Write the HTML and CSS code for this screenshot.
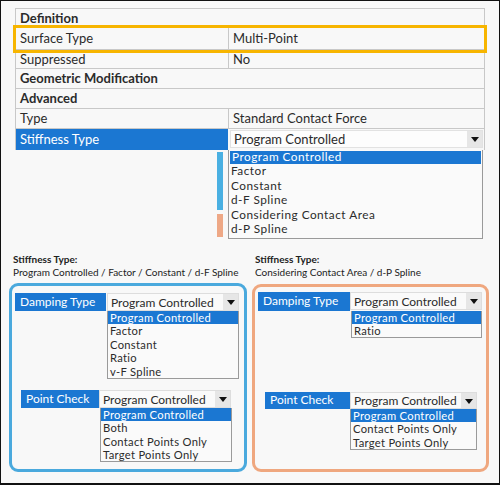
FILE: index.html
```html
<!DOCTYPE html>
<html lang="en">
  <head>
    <meta charset="UTF-8">
    <title>Contact Stiffness Options</title>
    <link rel="stylesheet" href="styles.css">
  </head>
  <body>
    <div class="frame">

      <!-- details grid -->
      <div class="props">
        <div class="row header"><span class="cell">Definition</span></div>
        <div class="row picked"><span class="cell">Surface Type</span><span class="cell">Multi-Point</span></div>
        <div class="row"><span class="cell">Suppressed</span><span class="cell">No</span></div>
        <div class="row header"><span class="cell">Geometric Modification</span></div>
        <div class="row header"><span class="cell">Advanced</span></div>
        <div class="row"><span class="cell">Type</span><span class="cell">Standard Contact Force</span></div>
        <div class="row active">
          <span class="cell">Stiffness Type</span>
          <span class="cell"><span class="combo wide">Program Controlled<span class="arrow"></span></span></span>
        </div>
      </div>

      <div class="popup">
        <div class="marks">
          <span class="mark blue"></span>
          <span class="mark peach"></span>
        </div>
        <ul class="options main-list">
          <li class="sel">Program Controlled</li>
          <li>Factor</li>
          <li>Constant</li>
          <li>d-F Spline</li>
          <li>Considering Contact Area</li>
          <li>d-P Spline</li>
        </ul>
      </div>

      <div class="cases">
        <div class="case left">
          <div class="caption"><b>Stiffness Type:</b><br>Program Controlled / Factor / Constant / d-F Spline</div>
          <div class="panel blue">
            <div class="group damp">
              <span class="label">Damping Type</span>
              <span class="combo">Program Controlled<span class="arrow"></span></span>
            </div>
            <ul class="options damp-list">
              <li class="sel">Program Controlled</li>
              <li>Factor</li>
              <li>Constant</li>
              <li>Ratio</li>
              <li>v-F Spline</li>
            </ul>
            <div class="group check">
              <span class="label">Point Check</span>
              <span class="combo">Program Controlled<span class="arrow"></span></span>
            </div>
            <ul class="options check-list">
              <li class="sel">Program Controlled</li>
              <li>Both</li>
              <li>Contact Points Only</li>
              <li>Target Points Only</li>
            </ul>
          </div>
        </div>

        <div class="case right">
          <div class="caption"><b>Stiffness Type:</b><br>Considering Contact Area / d-P Spline</div>
          <div class="panel peach">
            <div class="group damp">
              <span class="label">Damping Type</span>
              <span class="combo">Program Controlled<span class="arrow"></span></span>
            </div>
            <ul class="options damp-list">
              <li class="sel">Program Controlled</li>
              <li>Ratio</li>
            </ul>
            <div class="group check">
              <span class="label">Point Check</span>
              <span class="combo">Program Controlled<span class="arrow"></span></span>
            </div>
            <ul class="options check-list">
              <li class="sel">Program Controlled</li>
              <li>Contact Points Only</li>
              <li>Target Points Only</li>
            </ul>
          </div>
        </div>
      </div>

    </div>
  </body>
</html>
```

FILE: styles.css
```css
html {
  font-family: Lato, "Noto Sans", sans-serif;
}

body {
  margin: 0;
}

.frame {
  box-sizing: border-box;
  width: 500px;
  height: 485px;
  border: 1px solid #111;
  border-bottom-width: 2px;
  background: #f8f8f8;
  color: #2b2b2b;
  font-size: 13px;
  overflow: hidden;
}

/* details grid */
.props {
  margin: 7px 0 0 14px;
  width: 470px;
  box-sizing: border-box;
  border: 1px solid #c8c8c8;
  border-bottom: none;
}

.row {
  display: grid;
  grid-template-columns: 212px 1fr;
  height: 20px;
  border-bottom: 1px solid #c8c8c8;
  box-sizing: border-box;
}

.row:first-child {
  height: 19px;
}

.cell {
  padding-left: 4px;
  line-height: 19px;
  white-space: nowrap;
}

.row:first-child .cell {
  line-height: 18px;
}

.cell + .cell {
  border-left: 1px solid #c8c8c8;
}

.row.header .cell {
  font-weight: bold;
}

.row.picked {
  height: 22px;
  outline: 3px solid #f7b500;
}

.row.picked .cell {
  line-height: 21px;
}

.row.picked + .row {
  height: 19px;
}

.row.picked + .row .cell {
  line-height: 18px;
}

.row.active {
  height: 21px;
  border-bottom: none;
}

.row.active .cell:first-child {
  background: #1b77d2;
  color: #fff;
  line-height: 20px;
}

.row.active .cell + .cell {
  padding: 1px 1px 0 1px;
  border-left-color: #f8f8f8;
}

/* closed drop-down box */
.combo {
  position: relative;
  display: block;
  box-sizing: border-box;
  height: 18px;
  padding-left: 3px;
  line-height: 17px;
  background: #fdfdfd;
  border: 1px solid #e2e2e2;
  white-space: nowrap;
}

.arrow {
  position: absolute;
  right: 0;
  top: 0;
  width: 15px;
  height: 16px;
  background: #e6e6e6;
}

.arrow::after {
  content: "";
  position: absolute;
  left: 4px;
  top: 6px;
  border-left: 4px solid transparent;
  border-right: 4px solid transparent;
  border-top: 5px solid #111;
}

/* opened lists */
.options {
  list-style: none;
  margin: 0;
  padding: 0;
  box-sizing: border-box;
  background: #fafafa;
  border: 1px solid #9a9a9a;
  border-top: none;
}

.options li {
  padding-left: 2px;
  white-space: nowrap;
}

.options li.sel {
  background: #1b77d2;
  color: #fff;
}

.popup {
  display: flex;
  margin-left: 216px;
}

.marks {
  display: flex;
  flex-direction: column;
  padding-top: 2px;
  width: 11px;
}

.mark {
  display: block;
  width: 6px;
}

.mark.blue {
  height: 58px;
  background: #4ab0e2;
}

.mark.peach {
  height: 23px;
  margin-top: 4px;
  background: #eea886;
}

.main-list {
  width: 255px;
  height: 89px;
}

.main-list li {
  height: 14.5px;
  line-height: 14.5px;
  font-size: 11.8px;
  letter-spacing: 0.5px;
}

.main-list li.sel {
  margin: 1px 1px 0 1px;
  height: 13px;
  line-height: 12px;
}

/* bottom comparison */
.cases {
  display: flex;
  gap: 5px;
  margin: 14px 0 0 8px;
}

.case {
  width: 238px;
  font-size: 12px;
}

.case.right {
  width: 237px;
}

.caption {
  font-size: 10px;
  line-height: 13px;
  padding-left: 4px;
  height: 30px;
  color: #222;
}

.case.right .caption {
  padding-left: 3px;
}

.panel {
  box-sizing: border-box;
  height: 189px;
  border: 3px solid;
  border-radius: 9px;
  padding-top: 7px;
}

.panel.blue {
  border-color: #4aa9dd;
}

.panel.peach {
  border-color: #efa77f;
  margin-top: 1px;
  height: 188px;
  padding-top: 5px;
}

.group {
  display: flex;
  height: 18px;
}

.label {
  background: #1b77d2;
  color: #fff;
  padding-left: 5px;
  line-height: 17px;
  white-space: nowrap;
}

.group .combo {
  background: #fafafa;
  border-color: #ddd;
}

.damp-list li,
.check-list li {
  height: 13.5px;
  line-height: 13.5px;
  font-size: 11.2px;
  letter-spacing: 0.3px;
}

.damp-list li.sel,
.check-list li.sel {
  height: 13px;
  line-height: 13px;
}

/* left case */
.left .damp { margin-left: 3px; }
.left .damp .label { width: 86px; }
.left .damp .combo { width: 132px; margin-left: 1px; }
.left .damp-list { margin-left: 95px; width: 132px; height: 68px; }

.left .check { margin-left: 9px; margin-top: 11px; }
.left .check .label { width: 73px; }
.left .check .combo { width: 132px; }
.left .check-list { margin-left: 88px; width: 132px; height: 54px; }

/* right case */
.right .damp { margin-left: 3px; height: 19px; }
.right .damp .label { width: 87px; line-height: 18px; }
.right .damp .combo { width: 132px; }
.right .damp-list { margin-left: 96px; width: 131px; height: 27px; }

.right .check { margin-left: 10px; margin-top: 54px; height: 17px; }
.right .check .label { width: 80px; line-height: 16px; }
.right .check .combo { width: 127px; height: 17px; line-height: 16px; }
.right .check .arrow { height: 15px; }
.right .check-list { margin-left: 95px; width: 127px; height: 41px; }
```
